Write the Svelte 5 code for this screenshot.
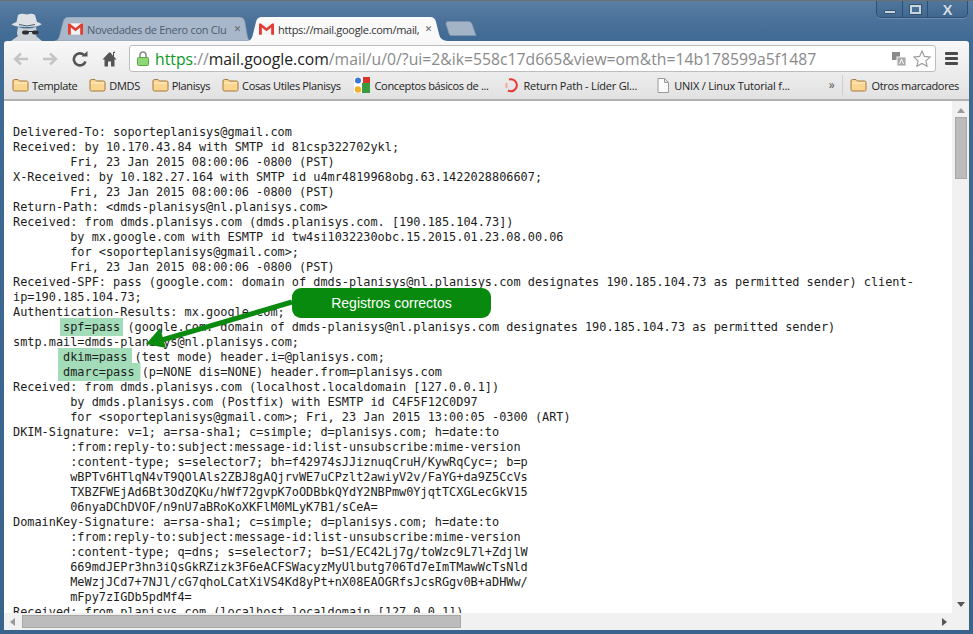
<script>
	const folders = ['Template', 'DMDS', 'Planisys', 'Cosas Utiles Planisys'];

	const lines = `Delivered-To: soporteplanisys@gmail.com
Received: by 10.170.43.84 with SMTP id 81csp322702ykl;
        Fri, 23 Jan 2015 08:00:06 -0800 (PST)
X-Received: by 10.182.27.164 with SMTP id u4mr4819968obg.63.1422028806607;
        Fri, 23 Jan 2015 08:00:06 -0800 (PST)
Return-Path: <dmds-planisys@nl.planisys.com>
Received: from dmds.planisys.com (dmds.planisys.com. [190.185.104.73])
        by mx.google.com with ESMTP id tw4si1032230obc.15.2015.01.23.08.00.06
        for <soporteplanisys@gmail.com>;
        Fri, 23 Jan 2015 08:00:06 -0800 (PST)
Received-SPF: pass (google.com: domain of dmds-planisys@nl.planisys.com designates 190.185.104.73 as permitted sender) client-
ip=190.185.104.73;
Authentication-Results: mx.google.com;`;

	const rest = `Received: from dmds.planisys.com (localhost.localdomain [127.0.0.1])
        by dmds.planisys.com (Postfix) with ESMTP id C4F5F12C0D97
        for <soporteplanisys@gmail.com>; Fri, 23 Jan 2015 13:00:05 -0300 (ART)
DKIM-Signature: v=1; a=rsa-sha1; c=simple; d=planisys.com; h=date:to
        :from:reply-to:subject:message-id:list-unsubscribe:mime-version
        :content-type; s=selector7; bh=f42974sJJiznuqCruH/KywRqCyc=; b=p
        wBPTv6HTlqN4vT9QOlAls2ZBJ8gAQjrvWE7uCPzlt2awiyV2v/FaYG+da9Z5CcVs
        TXBZFWEjAd6Bt3OdZQKu/hWf72gvpK7oODBbkQYdY2NBPmw0YjqtTCXGLecGkV15
        06nyaDChDVOF/n9nU7aBRoKoXKFlM0MLyK7B1/sCeA=
DomainKey-Signature: a=rsa-sha1; c=simple; d=planisys.com; h=date:to
        :from:reply-to:subject:message-id:list-unsubscribe:mime-version
        :content-type; q=dns; s=selector7; b=S1/EC42Lj7g/toWzc9L7l+ZdjlW
        669mdJEPr3hn3iQsGkRZizk3F6eACFSWacyzMyUlbutg706Td7eImTMawWcTsNld
        MeWzjJCd7+7NJl/cG7qhoLCatXiVS4Kd8yPt+nX08EAOGRfsJcsRGgv0B+aDHWw/
        mFpy7zIGDb5pdMf4=
Received: from planisys.com (localhost.localdomain [127.0.0.1])`;
</script>

{#snippet folder()}
	<svg class="bm-icon" width="17" height="14" viewBox="0 0 17 14">
		<path d="M1 3 Q1 1.500 2.500 1.500 H6 L7.500 3 H14.500 Q16 3 16 4.500 V11.500 Q16 13 14.500 13 H2.500 Q1 13 1 11.500 Z" fill="#fbd691" stroke="#a6793c" />
		<path d="M2 5 H15" stroke="#fff0cf" />
	</svg>
{/snippet}

{#snippet gmail()}
	<svg class="fav" width="15" height="12" viewBox="0 0 16 12">
		<rect x="0" y="0" width="16" height="12" fill="#f4f4f4" />
		<path d="M0 12 V0 H2 L8 5 L14 0 H16 V12 H13 V4.500 L8 8.500 L3 4.500 V12 Z" fill="#e23d32" />
	</svg>
{/snippet}

<div class="window">
	<div class="tabstrip">
		<svg class="spy" width="34" height="28" viewBox="0 0 34 28">
			<path d="M8 14 Q17 17 26 14 L27 20 Q27 22 26 23 L32 28 H1 L8 23 Q6.500 21 7 20 Z" fill="#cdd2d8" />
			<path d="M8 2 Q11 0 17 1.500 Q22 0 25 2 L27 9 Q31 10 31.500 11.500 Q28 14 17 14 Q5 14 1.500 11.500 Q3 10 6.500 9 Z" fill="#dde1e6" />
			<path d="M9 11.500 Q17 14.500 25 11.500" fill="none" stroke="#4d5d6d" />
			<rect x="12" y="17.500" width="7" height="4" rx="2" fill="#2a3036" />
			<rect x="22" y="17.500" width="6.500" height="4" rx="2" fill="#2a3036" />
			<path d="M18 18.500 H23" stroke="#2a3036" />
		</svg>
		<div class="tab">
			<svg class="tab-shape" width="196" height="24" viewBox="0 0 196 24" preserveAspectRatio="none">
				<path d="M0 24 Q4 24 5.500 19 L9 5 Q10 0 15 0 H185 Q190 0 191 5 L193 17 Q194 23 196 24 Z" fill="#a8b8ca" stroke="#7f93aa" stroke-width="0.6" />
			</svg>
			{@render gmail()}
			<span class="tab-title">Novedades de Enero con Clu</span>
			<span class="tab-x">✕</span>
		</div>
		<div class="tab active">
			<svg class="tab-shape" width="200" height="24" viewBox="0 0 200 24" preserveAspectRatio="none">
				<path d="M0 24 Q4 24 5.500 19 L9 5 Q10 0 15 0 H183 Q188 0 189 5 L192 17 Q193 23 200 24 Z" fill="#f9f9f9" />
			</svg>
			{@render gmail()}
			<span class="tab-title">https://mail.google.com/mail,</span>
			<span class="tab-x">✕</span>
		</div>
		<svg class="newtab" width="32" height="15" viewBox="0 0 32 15">
			<path d="M3 0.500 H24 Q26 0.500 27 3 L31 14.500 H6 Q4.500 14.500 4 12.500 L1 3 Q0.500 0.500 3 0.500 Z" fill="#a3b4c7" stroke="#8095ad" stroke-width="0.7" />
		</svg>
		<div class="controls">
			<span class="ctl min"><i></i></span>
			<span class="ctl max"><i></i></span>
			<span class="ctl close">X</span>
		</div>
	</div>

	<div class="toolbar">
		<svg class="nav" width="16" height="14" viewBox="0 0 16 14"><path d="M15 7 H3 M8 1.500 L2 7 L8 12.500" fill="none" stroke="#c4c4c4" stroke-width="2.400" /></svg>
		<svg class="nav fwd" width="16" height="14" viewBox="0 0 16 14"><path d="M1 7 H13 M8 1.500 L14 7 L8 12.500" fill="none" stroke="#c4c4c4" stroke-width="2.400" /></svg>
		<svg class="nav reload" width="16" height="16" viewBox="0 0 16 16"><path d="M13.500 10.500 A6 6 0 1 1 12 4" fill="none" stroke="#545454" stroke-width="2.600" /><path d="M9.500 5.500 H15.500 V0 Z" fill="#545454" /></svg>
		<svg class="nav home" width="15" height="16" viewBox="0 0 15 16"><path d="M7 1.500 L0.500 8.500 H2.500 V15.500 H6 V10.500 H9 V15.500 H12.500 V8.500 H14.500 L12 5.800 V2 H13 V0.500 L11 1 V4.800 L8.500 1.500 Z" fill="#555" /></svg>
		<div class="omnibox">
			<svg width="12" height="15" viewBox="0 0 12 15">
				<path d="M3 7 V4 A3 3 0 0 1 9 4 V7" fill="none" stroke="#8c8c8c" stroke-width="1.600" />
				<rect x="0.500" y="6.500" width="11" height="8" rx="1" fill="#8ed676" stroke="#5da648" />
			</svg>
			<span class="url"><span class="https">https</span><span class="dim">://</span><span class="host">mail.google.com</span><span class="dim">/mail/u/0/?ui=2&amp;ik=558c17d665&amp;view=om&amp;th=14b178599a5f1487</span></span>
			<svg class="translate" width="14" height="14" viewBox="0 0 14 14">
				<rect x="0" y="0" width="8" height="8" fill="#8a8a8a" />
				<rect x="5" y="5" width="9" height="9" fill="#a9a9a9" stroke="#f5f5f5" />
				<path d="M7.500 12 L9.500 7 L11.500 12" fill="none" stroke="#fff" />
			</svg>
			<svg class="star" width="18" height="17" viewBox="0 0 18 17">
				<path d="M9 1 L11.400 6.400 L17.300 7 L12.900 10.900 L14.100 16.300 L9 13.400 L3.900 16.300 L5.100 10.900 L0.700 7 L6.600 6.400 Z" fill="#fcfcfc" stroke="#9a9a9a" stroke-width="1.100" />
			</svg>
		</div>
		<div class="menu"><i></i><i></i><i></i></div>
	</div>

	<div class="bookmarks">
		{#each folders as name}
			<span class="bm">{@render folder()}{name}</span>
		{/each}
		<span class="bm google">
			<svg class="bm-icon" width="16" height="16" viewBox="0 0 16 16">
				<rect x="0" y="0" width="16" height="16" fill="#fff" />
				<rect x="9" y="0" width="7" height="6" fill="#d9352a" />
				<path d="M8 6 H16 V16 H8 Z" fill="#3a9a40" />
				<circle cx="4" cy="3.500" r="3" fill="#3f74d8" />
				<circle cx="4" cy="12.500" r="3.200" fill="#f2b125" />
			</svg>
			Conceptos básicos de ...
		</span>
		<span class="bm rp">
			<svg class="bm-icon" width="15" height="15" viewBox="0 0 15 15">
				<path d="M4 1.500 A6 6 0 1 1 3 12.500" fill="none" stroke="#e6392f" stroke-width="2" />
				<path d="M1.800 5 A6 6 0 0 0 2 10" fill="none" stroke="#f6a7a1" stroke-width="2" />
			</svg>
			Return Path - Líder Gl...
		</span>
		<span class="bm doc">
			<svg class="bm-icon" width="12" height="15" viewBox="0 0 12 15">
				<path d="M1 0.500 H7.500 L11.500 4.500 V14.500 H1 Z M7.500 0.500 V4.500 H11.500" fill="#fbfbfb" stroke="#9a9a9a" />
			</svg>
			UNIX / Linux Tutorial f...
		</span>
		<span class="more">»</span>
		<span class="bm other">{@render folder()}Otros marcadores</span>
	</div>

	<div class="content">
		<div class="viewport">
			<pre>{lines}
       <mark class="spf">spf=pass</mark> (google.com: domain of dmds-planisys@nl.planisys.com designates 190.185.104.73 as permitted sender)
smtp.mail=dmds-planisys@nl.planisys.com;
       <mark class="dkim">dkim=pass</mark> (test mode) header.i=@planisys.com;
       <mark class="dmarc">dmarc=pass</mark> (p=NONE dis=NONE) header.from=planisys.com
{rest}</pre>
			<svg class="arrow" width="160" height="70" viewBox="0 0 160 70">
				<path d="M150 14 L20 52" stroke="#0b8a10" stroke-width="5" />
				<path d="M4 56 L18 40 L24 60 Z" fill="#0b8a10" />
			</svg>
			<div class="callout">Registros correctos</div>
		</div>
		<div class="vbar">
			<span class="up"></span>
			<span class="vthumb"></span>
			<span class="down"></span>
		</div>
		<div class="hbar">
			<span class="left"></span>
			<span class="hthumb"></span>
			<span class="right"></span>
		</div>
		<div class="corner"></div>
	</div>
</div>

<style>
	:global(body) {
		margin: 0;
		overflow: hidden;
	}

	.window {
		width: 973px;
		height: 634px;
		box-sizing: border-box;
		padding: 0 4px 4px;
		display: flex;
		flex-direction: column;
		background: linear-gradient(#5a7ea3 0, #4a7199 20px, #3f6a94 41px, #3a638c 100%);
		border-top: 1px solid #6c6f74;
		font-family: "Open Sans", sans-serif;
		color: #222;
		overflow: hidden;
	}

	.tabstrip {
		height: 40px;
		flex: none;
		display: flex;
		align-items: flex-end;
		position: relative;
	}

	.spy {
		margin-left: 6px;
		flex: none;
	}

	.tab {
		width: 196px;
		height: 24px;
		margin-left: 10px;
		box-sizing: border-box;
		padding: 0 9px 0 14px;
		position: relative;
		isolation: isolate;
		display: flex;
		align-items: center;
		gap: 4px;
		flex: none;
		color: #4c5c6e;
		font-size: 11px;
		letter-spacing: -0.3px;
	}

	.tab.active {
		width: 200px;
		margin-left: -3px;
		color: #333;
		padding: 0 15px 0 12px;
		z-index: 1;
	}

	.tab-shape {
		position: absolute;
		left: 0;
		top: 0;
		z-index: -1;
	}

	.fav {
		flex: none;
	}

	.tab-title {
		flex: 1;
		min-width: 0;
		white-space: nowrap;
		overflow: hidden;
	}

	.tab-x {
		flex: none;
		font-size: 9px;
		font-weight: 700;
		color: #666;
		font-family: "DejaVu Sans", sans-serif;
	}

	.newtab {
		margin-left: -2px;
		margin-bottom: 5px;
		flex: none;
	}

	.controls {
		margin-left: auto;
		margin-right: 1px;
		align-self: flex-start;
		display: flex;
		height: 17px;
		width: 92px;
		box-sizing: border-box;
		border: 1px solid #2d4f72;
		border-top: 0;
		border-radius: 0 0 5px 5px;
		background: linear-gradient(#50769c, #41698f);
		box-shadow: 0 1px 0 rgba(255, 255, 255, 0.2);
	}

	.ctl {
		display: flex;
		align-items: center;
		justify-content: center;
		border-left: 1px solid #2d4f72;
		width: 25px;
		box-sizing: border-box;
	}

	.min {
		border-left: 0;
	}

	.min i {
		width: 12px;
		height: 4px;
		margin-top: 6px;
		background: #c8d4df;
		border: 1px solid #33536f;
		box-sizing: border-box;
		border-radius: 1px;
	}

	.max i {
		width: 11px;
		height: 9px;
		border: 2px solid #c8d4df;
		outline: 1px solid #33536f;
		box-sizing: border-box;
	}

	.close {
		flex: 1;
		color: #d4dde6;
		font: 700 15px "Liberation Sans", sans-serif;
		text-shadow: 0 0 1px #2d4f72;
	}

	.toolbar {
		height: 32px;
		flex: none;
		box-sizing: border-box;
		padding: 4px 3px 1px 9px;
		display: flex;
		align-items: center;
		background: linear-gradient(#f8f8f8, #ececec);
		border-radius: 3px 3px 0 0;
		position: relative;
		z-index: 2;
	}

	.nav {
		flex: none;
	}

	.fwd {
		margin-left: 13px;
	}

	.reload {
		margin-left: 14px;
	}

	.home {
		margin-left: 14px;
	}

	.omnibox {
		margin-left: 12px;
		width: 807px;
		height: 27px;
		flex: none;
		box-sizing: border-box;
		background: #fff;
		border: 1px solid #bdbdbd;
		border-radius: 3px;
		display: flex;
		align-items: center;
		padding: 0 4px 0 7px;
	}

	.url {
		margin-left: 6px;
		font-size: 15.750px;
		white-space: nowrap;
		flex: 1;
	}

	.https {
		color: #0a9a1e;
	}

	.dim {
		color: #8a8a8a;
	}

	.host {
		color: #222;
	}

	.translate {
		margin-right: 7px;
	}

	.star {
		flex: none;
	}

	.menu {
		margin-left: 9px;
		display: flex;
		flex-direction: column;
		gap: 2px;
		width: 13px;
	}

	.menu i {
		height: 3px;
		background: #4a4a4a;
		border-radius: 1px;
	}

	.bookmarks {
		height: 28px;
		flex: none;
		box-sizing: border-box;
		padding: 0 10px 2px 8px;
		display: flex;
		align-items: center;
		gap: 12px;
		background: linear-gradient(#ececec, #e2e2e2);
		border-bottom: 2px solid #b0b0b0;
		font-size: 11px;
		letter-spacing: -0.35px;
		color: #222;
		white-space: nowrap;
	}

	.bm {
		display: flex;
		align-items: center;
		gap: 3px;
	}

	.bm-icon {
		flex: none;
	}

	.google {
		margin-left: 1px;
		gap: 5px;
	}

	.rp {
		margin-left: 4px;
		gap: 4px;
		letter-spacing: -0.2px;
	}

	.doc {
		margin-left: 8px;
		gap: 5px;
		letter-spacing: -0.2px;
	}

	.more {
		margin-left: auto;
		font-size: 12px;
		color: #555;
		padding-right: 8px;
		border-right: 1px solid #d0d0d0;
		line-height: 20px;
	}

	.other {
		margin-left: -5px;
		gap: 4px;
	}

	.content {
		flex: 1;
		min-height: 0;
		display: grid;
		grid-template-columns: 1fr 17px;
		grid-template-rows: 1fr 17px;
		background: #fff;
	}

	.viewport {
		position: relative;
		overflow: hidden;
		min-height: 0;
		background: #fff;
	}

	pre {
		margin: 0;
		padding: 24px 0 0 9px;
		font: 11.880px/15px "DejaVu Sans Mono", monospace;
		color: #1c1c1c;
		white-space: pre;
	}

	mark {
		color: inherit;
		background: #a3dcb8;
		box-shadow: -1px 0 0 2px #a3dcb8, 1px 0 0 2px #a3dcb8;
	}

	.dkim {
		box-shadow: -3px 0 0 2px #a3dcb8, 3px 0 0 2px #a3dcb8;
	}

	.dmarc {
		box-shadow: -3px 0 0 2px #a3dcb8, 3.500px 0 0 2px #a3dcb8;
	}

	.arrow {
		position: absolute;
		left: 138px;
		top: 187px;
	}

	.callout {
		position: absolute;
		left: 288px;
		top: 187px;
		width: 199px;
		height: 30px;
		border-radius: 9px;
		background: #078a0d;
		color: #fff;
		font: 14px/30px "Liberation Sans", sans-serif;
		text-align: center;
	}

	.vbar {
		background: #f1f1f1;
		display: flex;
		flex-direction: column;
		align-items: center;
	}

	.up {
		margin-top: 7px;
		border: 4px solid transparent;
		border-top: 0;
		border-bottom: 5px solid #9a9a9a;
	}

	.vthumb {
		width: 12px;
		height: 62px;
		margin-top: 4px;
		box-sizing: border-box;
		background: #bcbcbc;
		border: 1px solid #a8a8a8;
	}

	.down {
		margin-top: auto;
		margin-bottom: 6px;
		border: 4px solid transparent;
		border-bottom: 0;
		border-top: 5px solid #555;
	}

	.hbar {
		background: #f1f1f1;
		display: flex;
		align-items: center;
	}

	.left {
		margin-left: 6px;
		border: 4px solid transparent;
		border-left: 0;
		border-right: 5px solid #9a9a9a;
	}

	.hthumb {
		width: 439px;
		height: 13px;
		margin-left: 7px;
		box-sizing: border-box;
		background: #bcbcbc;
		border: 1px solid #a8a8a8;
	}

	.right {
		margin-left: auto;
		margin-right: 5px;
		border: 4px solid transparent;
		border-right: 0;
		border-left: 5px solid #555;
	}

	.corner {
		background: #f1f1f1;
	}
</style>
